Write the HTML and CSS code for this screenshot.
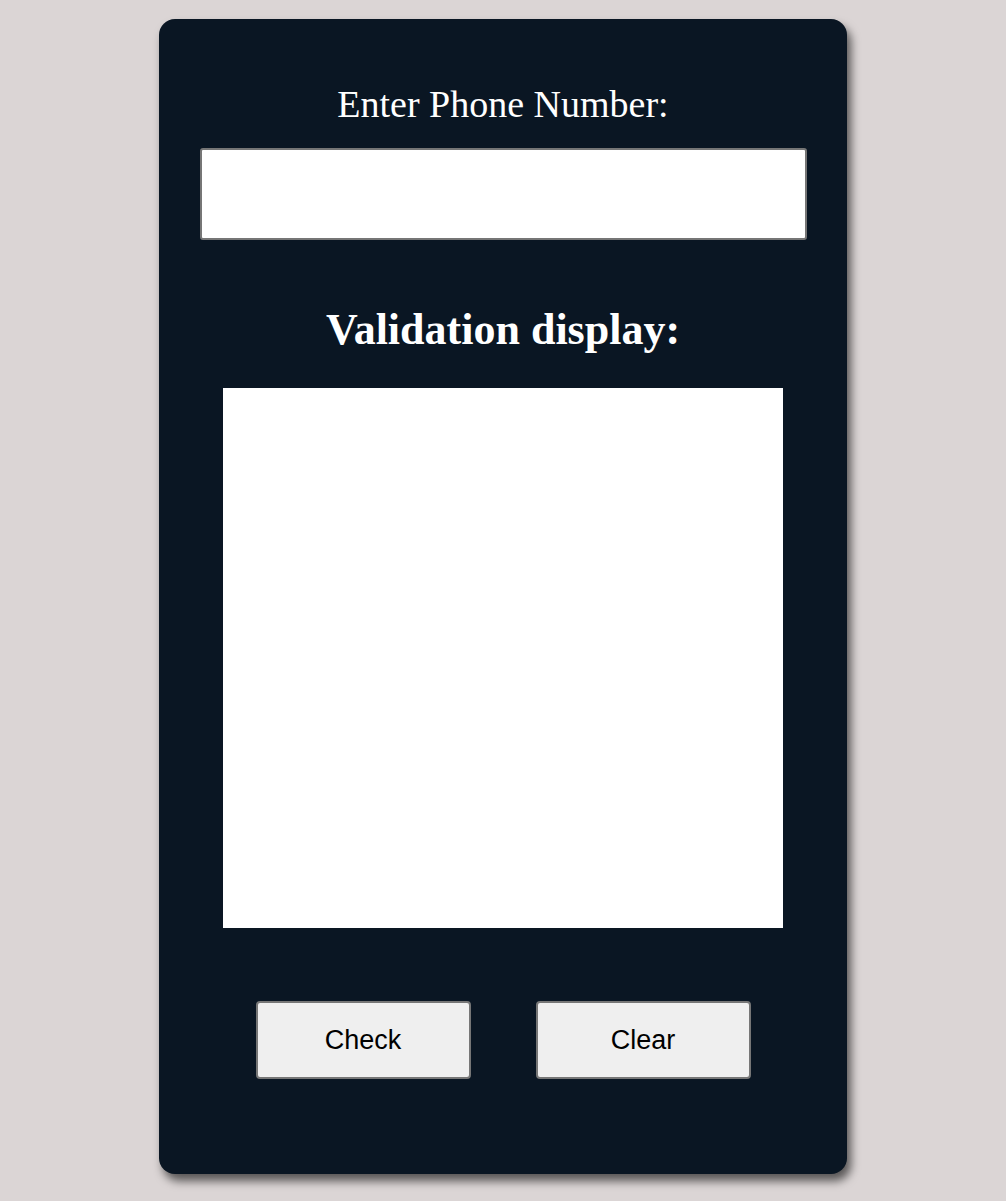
FILE: index.html
```html
<!DOCTYPE html>
<html>
<head>
<meta charset="utf-8">
<link rel="stylesheet" href="styles.css">
</head>
<body>
<main class="card">
  <label class="label" for="phone">Enter Phone Number:</label>
  <input class="phone-input" id="phone" type="text">
  <h2 class="heading">Validation display:</h2>
  <div class="display"></div>
  <div class="actions">
    <button class="btn">Check</button>
    <button class="btn">Clear</button>
  </div>
</main>
</body>
</html>
```

FILE: styles.css
```css
html, body {
  margin: 0;
  padding: 0;
}
body {
  background: #dbd5d5;
  font-family: "Liberation Serif", "Times New Roman", serif;
  padding: 19px 1px 0 0;
  height: 1201px;
  box-sizing: border-box;
}
.card {
  width: 688px;
  height: 1155px;
  margin: 0 auto;
  box-sizing: border-box;
  background: #0a1623;
  border-radius: 16px;
  box-shadow: 4px 7px 10px rgba(0, 0, 0, 0.6);
  padding: 64px 40px 0 41px;
  display: flex;
  flex-direction: column;
  align-items: center;
}
.label {
  color: #fff;
  font-size: 38px;
  line-height: 42px;
}
.phone-input {
  margin-top: 23px;
  width: 607px;
  height: 92px;
  box-sizing: border-box;
  border: 2px solid #767676;
  border-radius: 3px;
  background: #fff;
  font-size: 24px;
}
.heading {
  margin: 64px 0 0;
  color: #fff;
  font-size: 44px;
  line-height: 52px;
  font-weight: bold;
}
.display {
  margin-top: 32px;
  width: 560px;
  height: 540px;
  background: #fff;
}
.actions {
  margin-top: 73px;
  display: flex;
  gap: 65px;
}
.btn {
  width: 215px;
  height: 78px;
  background: #efefef;
  border: 2px solid #767676;
  border-radius: 4px;
  font-family: "Liberation Sans", Arial, sans-serif;
  font-size: 27px;
  color: #000;
}
```
